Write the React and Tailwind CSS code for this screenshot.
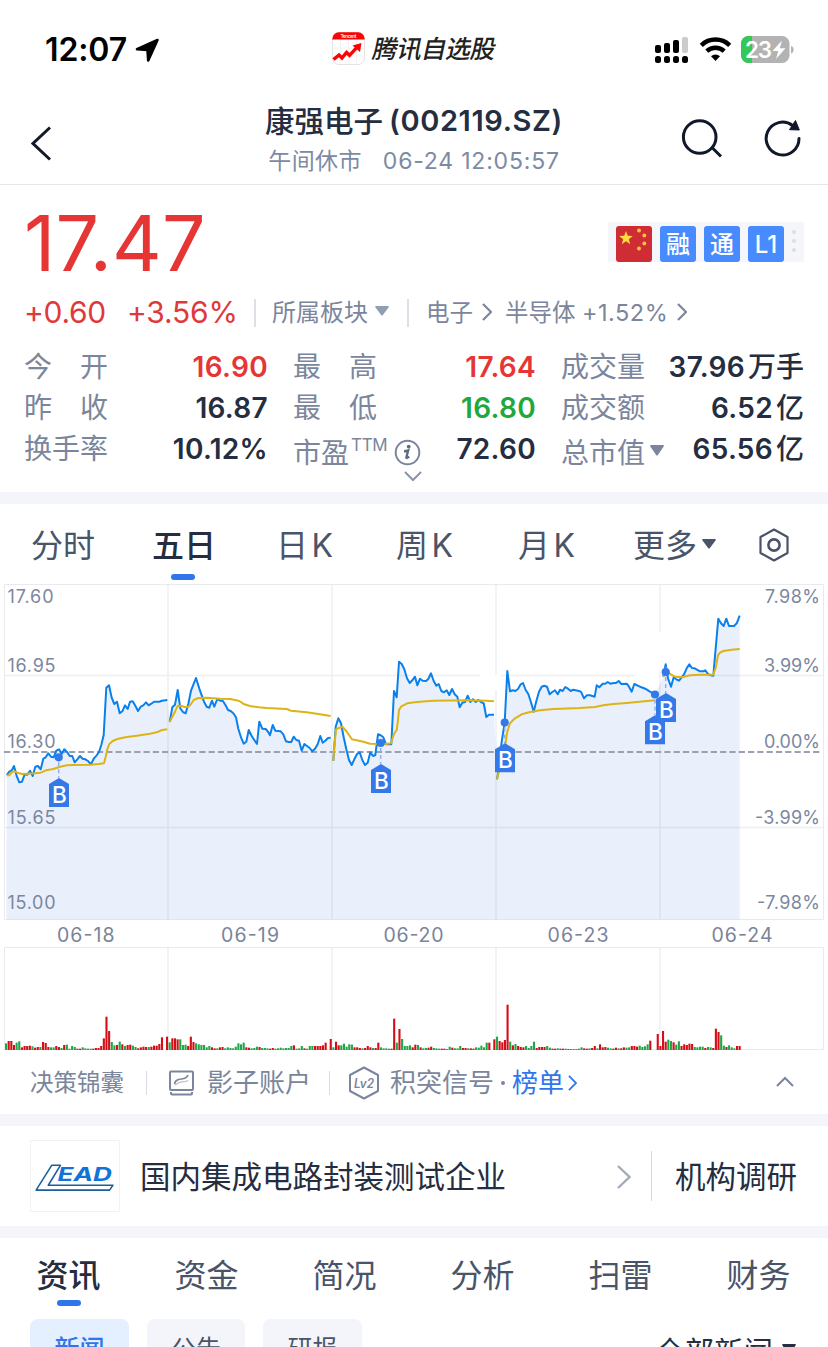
import React, { useState } from "react";

const quoteColumns = [
  [
    { label: "今　开", value: "16.90", color: "text-[#e63535]" },
    { label: "昨　收", value: "16.87", color: "text-[#252d40]" },
    { label: "换手率", value: "10.12%", color: "text-[#252d40]" },
  ],
  [
    { label: "最　高", value: "17.64", color: "text-[#e63535]" },
    { label: "最　低", value: "16.80", color: "text-[#1fa83c]" },
    { label: "市盈", value: "72.60", color: "text-[#252d40]", extra: "ttm" },
  ],
  [
    { label: "成交量", value: "37.96", unit: "万手", color: "text-[#252d40]" },
    { label: "成交额", value: "6.52", unit: "亿", color: "text-[#252d40]" },
    { label: "总市值", value: "65.56", unit: "亿", color: "text-[#252d40]", extra: "arrow" },
  ],
];

// Each session: x offset in px, then "x,y" samples in thirds of a pixel (y from 500px).
const sessions = [
  {
    x: 0,
    price:
      "20,825 28,815 36,810 42,798 50,828 58,847 66,845 74,823 82,824 90,812 98,828 106,800 114,798 122,808 130,776 137,772 145,760 153,770 161,772 169,752 177,748 185,762 193,748 201,756 209,768 217,768 224,787 232,778 240,768 248,776 256,778 264,783 273,793 281,776 290,766 297,756 304,735 311,705 319,563 327,556 335,593 343,612 351,605 359,640 367,634 375,616 383,627 390,605 398,604 406,617 414,633 422,620 430,616 438,607 446,616 454,611 462,605 478,605 486,602 502,600",
    avg: "20,826 28,826 36,816 44,814 52,818 66,822 106,820 122,818 138,811 160,807 178,801 200,796 220,795 270,794 296,792 312,790 317,770 322,748 328,732 338,723 352,717 380,711 410,707 450,701 470,697 486,690 502,688",
  },
  {
    x: 0,
    price:
      "509,666 517,622 525,614 533,570 541,625 549,636 557,640 565,612 573,572 588,534 600,572 612,605 620,620 628,623 636,602 643,620 652,597 660,602 668,602 676,614 684,630 692,633 700,640 708,652 715,686 723,712 731,731 739,725 746,690 755,708 763,720 771,732 778,665 787,686 797,687 803,694 810,706 818,675 826,692 842,694 850,703 858,724 866,726 874,726 881,710 889,720 897,722 905,752 913,732 921,738 929,744 937,754 945,746 953,733 961,708 968,728 976,722 984,714 992,713",
    avg: "509,666 517,650 525,635 533,617 545,618 556,622 565,620 573,612 581,600 595,594 620,593 660,596 690,597 706,600 718,603 733,613 750,618 776,622 800,624 860,627 872,632 920,637 950,641 992,648",
  },
  {
    x: 320,
    price:
      "40,783 47,680 55,655 63,670 71,712 79,748 87,780 95,795 103,778 111,762 119,757 127,780 135,795 143,788 151,757 159,768 166,765 174,703 182,706 190,712 198,733 214,733 222,573 230,592 237,485 245,492 253,508 261,535 269,549 277,541 285,530 292,556 300,536 308,542 318,543 325,537 333,520 341,543 349,557 356,552 364,573 372,577 380,571 388,585 396,567 404,583 412,590 419,622 427,608 435,606 443,587 451,606 459,598 467,606 475,600 483,606 491,610 499,651 507,644 522,644",
    avg: "40,783 43,740 48,688 58,683 68,681 80,695 96,718 130,725 150,731 198,732 213,730 222,702 230,690 234,660 237,630 244,619 262,610 290,606 340,602 440,601 500,602 522,604",
  },
  {
    x: 320,
    price:
      "531,838 537,800 545,725 554,667 562,513 570,574 578,571 586,573 594,567 602,553 609,549 617,570 625,582 633,607 641,635 649,604 657,575 665,560 673,557 681,560 689,583 697,576 705,571 713,583 720,569 728,573 736,561 744,566 752,573 760,569 780,574 784,577 792,595 800,586 810,586 824,590 830,556 838,562 848,551 856,551 863,546 871,551 881,549 888,549 896,543 904,552 920,551 927,560 935,575 943,552 960,560 976,566 990,575 1005,583",
    avg: "531,838 545,780 556,735 562,695 570,670 585,655 605,643 630,636 660,631 700,627 780,624 825,621 850,616 880,612 920,609 1005,601",
  },
  {
    x: 560,
    price:
      "310,530 317,493 324,535 333,560 341,532 349,538 357,542 365,532 372,523 380,505 388,493 396,504 404,505 420,514 430,514 436,511 444,522 452,526 460,527 475,356 483,370 491,378 499,356 507,378 522,378 530,370 539,347",
    avg: "310,530 318,505 330,522 345,530 365,532 390,526 420,524 460,524 468,500 474,466 480,458 490,453 515,449 539,447",
  },
];

// r = up bar, g = down bar, number = height in thirds of a pixel
const volumes = [
  {
    x: 6,
    bars: "g20 r27 r27 r15 g22 g26 r8 r12 r12 r13 g11 r7 r9 g9 r24 r21 r9 g8 g8 r12 r9 g6 r15 g16 g4 g12 g9 r4 r4 g8 g5 g4 g4 r4 r6 r6 r12 r35 r100 r57 g24 g14 r15 g25 r17 g12 r15 r16 g13 g9 r5 r8 r10 r9 g9 r10 r13 r13 r18 r38",
  },
  {
    x: 167,
    bars: "r40 g23 r35 r35 r32 g32 g15 g16 r12 r40 r24 g20 g17 g15 g15 g8 g12 r8 r5 g5 r8 r9 g5 g8 g6 g5 g10 g20 g17 g22 r8 r7 g5 g6 g10 r9 g6 g6 g5 r4 r6 g4 g5 g7 g5 g6 g6 g12 r14 g4 g5 g12 r5 g4 g12 g12 r12 r12 r12 r14 r22",
  },
  {
    x: 330.7,
    bars: "r33 g8 r25 r14 g14 g19 g10 g17 g16 r8 r8 r6 g5 r6 r12 r8 g6 r6 r22 g8 g5 g5 g4 r4 r94 g22 r63 g33 g12 g12 g14 r8 r16 g15 r8 g5 g6 r7 r10 g6 g5 g4 r4 r4 g3 g10 r7 g5 g5 g12 r6 r6 g5 r5 r4 g8 g7 g13 g8 g22 r22",
  },
  {
    x: 494.3,
    bars: "r32 g40 r27 r23 r30 r136 g25 r14 g18 r12 r9 r8 g12 g6 g12 g25 r6 r9 r9 r9 g12 g7 r4 r4 g5 r4 r4 g4 r3 g3 g3 g3 g4 g8 r5 r4 g5 r6 r12 g5 r17 r8 r9 g7 g5 r4 r7 g5 r5 r8 g7 g8 r12 r12 r10 g13 g9 g11 g17 r28",
  },
  {
    x: 657.7,
    bars: "r48 r12 r57 r25 g31 g27 r23 g16 g26 r12 r17 r15 r19 r18 g9 g8 g10 g10 r6 g9 g8 r6 r64 r54 g44 g13 r9 g14 g8 g5 r12 r12",
  },
];

const markers = [
  { x: 59, top: 778, dotX: 58.7, dotY: 757.3 },
  { x: 381, top: 764, dotX: 380.7, dotY: 743 },
  { x: 505, top: 743.3, dotX: 504.7, dotY: 722.5 },
  { x: 655, top: 715.3, dotX: 655, dotY: 694.5 },
  { x: 666, top: 693, dotX: 665.7, dotY: 672 },
];

const toPoints = (x0, raw) =>
  raw
    .split(" ")
    .map((pair) => {
      const [x, y] = pair.split(",").map(Number);
      return `${(x0 + x / 3).toFixed(1)},${(500 + y / 3).toFixed(1)}`;
    })
    .join(" ");

function Chevron({ className, d = "M1 1 9 9 1 17", box = "0 0 10 18", width = 2.2 }) {
  return (
    <svg className={className} viewBox={box} fill="none" stroke="currentColor" strokeWidth={width}>
      <path d={d} />
    </svg>
  );
}

function Triangle({ className }) {
  return (
    <svg className={className} viewBox="0 0 14 10" fill="currentColor" preserveAspectRatio="none">
      <path d="M1 0h12a.8.8 0 0 1 .7 1.3l-6 8a.9.9 0 0 1-1.4 0l-6-8A.8.8 0 0 1 1 0z" />
    </svg>
  );
}

function StatusBar() {
  return (
    <div className="flex h-[100px] items-center text-black">
      <div className="flex w-[332px] items-center pl-[45px]">
        <span className="w-[90px] text-[32px] font-semibold leading-none tracking-[-0.1px]">12:07</span>
        <svg className="h-[25px] w-[25px]" viewBox="0 0 25 25">
          <path
            d="M22.500 2 2 11.300l10.500.7.700 10.500z"
            stroke="#000"
            strokeWidth="2.600"
            strokeLinejoin="round"
          />
        </svg>
      </div>
      <div className="flex w-[323px] items-center">
        <svg className="mt-[-4px] h-[33px] w-[33px] shrink-0" viewBox="0 0 33 33">
          <rect x=".5" y=".5" width="32" height="32" rx="6.500" fill="#fff" stroke="#e3e3e3" />
          <path d="M8.500 8v24M16.500 8v24M24.500 8v24M1 16h31M1 24h31" stroke="#f1f1f1" strokeWidth=".8" />
          <path d="M.3 7.500V7A6.700 6.700 0 0 1 7 .3h19A6.700 6.700 0 0 1 32.700 7v.5z" fill="#f80505" />
          <text x="8.500" y="6" fontSize="5" fontWeight="500" fill="#fff" textLength="16">Tencent</text>
          <path d="m1.500 27.500 5.500-4.500 3 3 4.500-5.500 3 2.800 7.500-8" fill="none" stroke="#f80505" strokeWidth="3.400" />
          <path d="M20.500 13.500 29.500 11l-1.500 9z" fill="#f80505" />
        </svg>
        <span className="ml-[8px] mt-[-2px] -skew-x-12 text-[25px] font-medium leading-none tracking-[-0.5px] text-[#222]">
          腾讯自选股
        </span>
      </div>
      <svg className="h-[28px] w-[142px]" viewBox="655 36 142 28">
        {[655, 664, 673, 682].map((x) => (
          <rect key={x} x={x} y="56" width="6" height="7" rx="2.500" />
        ))}
        <rect x="655" y="45" width="6" height="8" rx="2" />
        <rect x="664" y="43" width="6" height="10" rx="2" />
        <rect x="673" y="40" width="6" height="13" rx="2" />
        <rect x="682" y="37" width="6" height="16" rx="2" fill="#ccc" />
        <g fill="none" stroke="#000" strokeWidth="4.400">
          <path d="M701.300 45.300a20.400 20.400 0 0 1 28.400 0" />
          <path d="M706.800 51.200a12.800 12.800 0 0 1 17.400 0" />
        </g>
        <path d="M711 56.300a6.600 6.600 0 0 1 9 0L715.500 61z" />
        <clipPath id="battery">
          <rect x="741" y="36" width="48.500" height="27" rx="7.500" />
        </clipPath>
        <g clipPath="url(#battery)">
          <rect x="741" y="36" width="49" height="27" fill="#b3b3b3" />
          <rect x="741" y="36" width="11" height="27" fill="#34c759" />
        </g>
        <path d="M791 46c3.500.5 3.500 7 0 7.500z" fill="#b3b3b3" />
        <text x="745" y="57.500" fontSize="22.500" fontWeight="600" fill="#fff" textLength="27">23</text>
        <path d="M782 40.500 772.500 51h5.800l-2.300 8 9.500-10.700h-5.800z" fill="#fff" />
      </svg>
    </div>
  );
}

function Header() {
  return (
    <div className="flex h-[85px] border-b border-[#e6e7ea] pt-px">
      <div className="w-[214px] pl-[31px] pt-[25px] text-[#141a2a]">
        <Chevron className="h-[35px] w-[21px]" box="31 126 21 35" d="M50 127.500 33 143.500l17 16" width={3} />
      </div>
      <div className="w-[400px] whitespace-nowrap text-center leading-none">
        <div className="flex h-10 items-center justify-center text-[29px] font-semibold text-[#252d40]">
          <span className="pt-px text-[29.500px] font-medium">康强电子</span>
          <span className="ml-[6px] mt-[-2px] tracking-[0.600px]">(002119.SZ)</span>
        </div>
        <div className="flex h-10 items-center justify-center text-[23px] text-[#7d8aa3]">
          <span className="tracking-[0.4px]">午间休市</span>
          <span className="ml-[21px] tracking-[0.800px]">06-24 12:05:57</span>
        </div>
      </div>
      <svg className="ml-[66px] mt-[16px] h-[44px] w-[124px]" viewBox="680 118 124 44" fill="none" stroke="#10182b" strokeWidth="3">
        <circle cx="699.700" cy="138" r="16.300" />
        <path d="m711.500 148 9.500 9.500" />
        <path d="M799 139.500A16.400 16.400 0 1 1 792.500 126.500" strokeLinecap="round" />
        <path d="M795.500 121.500 799.300 131l-9.800-.3z" fill="#10182b" strokeWidth="1" />
      </svg>
    </div>
  );
}

function Badges() {
  return (
    <div className="mt-[-2px] flex h-10 w-[196px] items-end bg-[#f5f6fa] pl-2 text-[24px] font-medium leading-none text-white">
      <svg className="mr-2 h-9 w-9 rounded-[3px]" viewBox="0 0 36 36">
        <rect width="36" height="36" fill="#d02c35" />
        <path d="m10 5 1.800 4.800 5 .2-4 3.200 1.400 5L10 15.300 5.800 18.200l1.400-5L3.200 10l5-.2z" fill="#fbdc3b" />
        <g fill="#f5cb35">
          <circle cx="23" cy="4.500" r="1.900" />
          <circle cx="28.300" cy="9.500" r="1.900" />
          <circle cx="28.300" cy="17.500" r="1.900" />
          <circle cx="23" cy="22.500" r="1.900" />
        </g>
      </svg>
      {["融", "通", "L1"].map((tag) => (
        <span key={tag} className="mr-2 flex h-9 w-9 items-center justify-center rounded-[3px] bg-[#478bff] pt-px">
          {tag}
        </span>
      ))}
      <div className="mb-2.5 flex flex-col gap-[5px]">
        <i className="h-1 w-1 rounded-full bg-[#dcdee2]" />
        <i className="h-1 w-1 rounded-full bg-[#dcdee2]" />
        <i className="h-1 w-1 rounded-full bg-[#dcdee2]" />
      </div>
    </div>
  );
}

function Quote() {
  return (
    <div className="h-[307px] whitespace-nowrap leading-none">
      <div className="flex h-[104px] items-center justify-between pl-6 pr-6 pt-3">
        <span className="text-[77px] tracking-[0.2px] text-[#e63535]">17.47</span>
        <Badges />
      </div>

      <div className="flex h-[47px] items-center pl-6 text-[23.500px] text-[#7b869c]">
        <span className="mt-[-1px] w-[103px] text-[30px] tracking-[-0.3px] text-[#e0393b]">+0.60</span>
        <span className="mt-[-1px] w-[127px] text-[30px] tracking-[-0.2px] text-[#e0393b]">+3.56%</span>
        <span className="h-7 w-[2px] bg-[#dde0e7]" />
        <span className="ml-4 w-[103px] text-[24px]">所属板块</span>
        <Triangle className="mt-[-3px] h-[10px] w-[14px] text-[#939db1]" />
        <span className="ml-[18px] h-7 w-[2px] bg-[#dde0e7]" />
        <span className="ml-[17px] w-[56px]">电子</span>
        <Chevron className="mt-[-1px] h-[18px] w-[10px]" />
        <span className="ml-[13px] w-[77px]">半导体</span>
        <span className="w-[95px] text-[23.500px] tracking-[0.500px]">+1.52%</span>
        <Chevron className="mt-[-1px] h-[18px] w-[10px]" />
      </div>

      <div className="mt-[10px] grid grid-cols-[243px_242px_242px] gap-x-[26px] pl-6">
        {quoteColumns.map((rows, col) => (
          <div key={col}>
            {rows.map((row) => (
              <div key={row.label} className="flex h-[41px] items-center justify-between">
                <span className={`flex items-center text-[28px] text-[#7b869c] ${row.extra ? "pt-2" : "pt-px"}`}>
                  {row.label}
                  {row.extra === "ttm" && (
                    <>
                      <span className="ml-[2px] mt-[-14px] w-[43px] text-[17px] tracking-[-0.3px]">TTM</span>
                      <svg className="h-[27px] w-[27px]" viewBox="0 0 27 27">
                        <circle cx="13.500" cy="13.500" r="11.800" fill="none" stroke="#7b869c" strokeWidth="2" />
                        <circle cx="14.700" cy="7.600" r="1.900" fill="#5f6b84" />
                        <path
                          d="M10 12.300q2.500-.2 4.200-1l-1.900 7.200q-.3 1.400 2.900-.9"
                          fill="none"
                          stroke="#5f6b84"
                          strokeWidth="2.300"
                        />
                      </svg>
                    </>
                  )}
                  {row.extra === "arrow" && <Triangle className="ml-[5px] mt-[-5px] h-[11px] w-[14px]" />}
                </span>
                <span className={`mr-[-1px] flex items-center text-[28px] font-semibold tracking-[0.3px] ${row.color}`}>
                  {row.value}
                  {row.unit && <span className="ml-[3px] pt-px font-medium tracking-normal">{row.unit}</span>}
                </span>
              </div>
            ))}
          </div>
        ))}
      </div>
      <Chevron
        className="ml-[404px] mt-[2px] h-[11px] w-[18px] text-[#8b95a9]"
        box="0 0 18 11"
        d="m1 1 8 8 8-8"
        width={2}
      />
    </div>
  );
}

function ChartTabs() {
  const [active, setActive] = useState("五日");
  const tabs = [
    { name: "分时", width: "w-[121px]" },
    { name: "五日", width: "w-[124px]" },
    { name: "日 K", width: "w-[120px]" },
    { name: "周 K", width: "w-[122px]" },
    { name: "月 K", width: "w-[115px]" },
  ];

  return (
    <div className="flex h-[80px] items-center whitespace-nowrap pl-[31px] pt-[3px] text-[32px] leading-none text-[#4a5468]">
      {tabs.map((tab) => (
        <button
          key={tab.name}
          onClick={() => setActive(tab.name)}
          className={`${tab.width} relative block h-full text-left [word-spacing:-5.500px] ${
            active === tab.name ? "font-medium text-[#252d40]" : ""
          }`}
        >
          {tab.name}
          {active === tab.name && (
            <span className="absolute bottom-1 left-[19px] h-[6px] w-6 rounded-full bg-[#2f76ea]" />
          )}
        </button>
      ))}
      <span>更多</span>
      <Triangle className="ml-[5px] mt-[-3px] h-[10px] w-[14px]" />
      <svg className="ml-[43px] mt-[-2px] h-[34px] w-[30px]" viewBox="0 0 30 34" fill="none" stroke="currentColor" strokeWidth="2.200">
        <path d="M15 1.500 28.500 9v16L15 32.500 1.500 25V9z" strokeLinejoin="round" />
        <circle cx="15" cy="17" r="5.600" strokeWidth="2.600" />
      </svg>
    </div>
  );
}

function Chart() {
  const pricePoints = sessions.map((s) => toPoints(s.x, s.price));
  const area = `6.300,919.500 ${pricePoints.join(" ")} 739.700,919.500`;

  return (
    <svg className="block h-[466px] w-[828px]" viewBox="0 584 828 466" fill="none">
      {/* grid */}
      <g stroke="#e9eaee">
        <path d="M4.500 584.500h819v335h-819zM4.500 947.500h819v102h-819z" />
        <path
          d="M5 675.500h475M501 675.500h134M660 675.500h163M5 827.500h818M168 585v334M332 585v334M496 585v90M496 690v229M660 585v47M660 672v247M168 948v101M332 948v101M496 948v101M660 948v101"
          strokeWidth="1.500"
          stroke="#eeeff2"
        />
      </g>
      <polygon points={area} fill="#2f6fe4" fillOpacity=".105" />
      <path d="M4 752H821" stroke="#9a9fb2" strokeWidth="2" strokeDasharray="6.200 3.100" />

      {/* price and average lines */}
      {sessions.map((s, i) => (
        <g key={i} strokeWidth="2" strokeLinejoin="round">
          <polyline points={pricePoints[i]} stroke="#0b80ea" />
          <polyline points={toPoints(s.x, s.avg)} stroke="#dcb416" />
        </g>
      ))}

      {/* buy markers */}
      {markers.map((m) => (
        <g key={m.x} fill="#3478ea">
          <path d={`M${m.dotX} ${m.dotY + 5}V${m.top}`} stroke="#8fb0ee" strokeWidth="1.500" strokeDasharray="4 3" />
          <circle cx={m.dotX} cy={m.dotY} r="4.100" />
          <path d={`M${m.x} ${m.top}l10 6v23h-20v-23z`} />
          <text x={m.x + 0.5} y={m.top + 25} textAnchor="middle" fontSize="22.500" fontWeight="500" fill="#fff">
            B
          </text>
        </g>
      ))}

      {/* axis labels */}
      <g fontSize="18" fill="#7b879f">
        {[
          ["17.60", 603, "7.98%", 55],
          ["16.95", 672, "3.99%", 56],
          ["16.30", 748, "0.00%", 56],
          ["15.65", 824, "-3.99%", 65],
          ["15.00", 909, "-7.98%", 63],
        ].map(([price, y, percent, width]) => (
          <g key={price}>
            <text x="7.500" y={y} textLength={price === "17.60" ? 46 : 48}>{price}</text>
            <text x={820 - width} y={y} textLength={width}>{percent}</text>
          </g>
        ))}
      </g>
      <g fontSize="19.500" fill="#7b8499">
        <text x="57" y="942" textLength="57.500">06-18</text>
        <text x="221" y="942" textLength="58">06-19</text>
        <text x="383.500" y="942" textLength="60">06-20</text>
        <text x="547.500" y="942" textLength="61">06-23</text>
        <text x="711.500" y="942" textLength="61">06-24</text>
      </g>

      {/* volume */}
      {volumes.map((v) =>
        v.bars.split(" ").map((bar, i) => {
          const h = Number(bar.slice(1)) / 3;
          return (
            <rect
              key={`${v.x}-${i}`}
              x={v.x + i * 2.643 - 1}
              y={1050 - h}
              width="2.100"
              height={h}
              fill={bar[0] === "r" ? "#d40d16" : "#1fa746"}
            />
          );
        })
      )}
    </svg>
  );
}

function Tools() {
  return (
    <div className="flex h-16 items-center whitespace-nowrap pt-px text-[26px] leading-none text-[#7b869c]">
      <span className="ml-[30px] w-[116px] text-[23.500px]">决策锦囊</span>
      <span className="h-6 w-px bg-[#d9dce3]" />
      <svg className="ml-[22px] h-[26px] w-[25px]" viewBox="0 0 25 26" fill="none" stroke="currentColor" strokeWidth="2">
        <rect x="1" y="1.500" width="23" height="18.500" rx="1" />
        <path d="M2 22v1.500q0 1 1 1h19q1 0 1-1V22" />
        <path d="M5.500 14q.5-3.500 4-4.500l4.500-.8q4-.7 5-3.700" strokeWidth="1.600" />
        <path d="M6 15q5-3.500 9-3.300 3 .3 4-1.700" strokeWidth="1.200" opacity=".5" />
      </svg>
      <span className="ml-[13px] w-[122px]">影子账户</span>
      <span className="h-6 w-px bg-[#d9dce3]" />
      <svg className="ml-[18px] h-[34px] w-[32px]" viewBox="0 0 32 34">
        <path d="M16 1.500 30 9v16l-14 7.500L2 25V9z" fill="none" stroke="currentColor" strokeWidth="2" strokeLinejoin="round" />
        <text x="6" y="21.500" fontSize="12.500" fontWeight="600" fontStyle="italic" fill="currentColor" textLength="20" lengthAdjust="spacingAndGlyphs">
          Lv2
        </text>
      </svg>
      <span className="ml-[10px] w-[111px]">积突信号</span>
      <span className="mr-[7px] h-1 w-1 rounded-full bg-[#7b869c]" />
      <span className="w-[56px] text-[#2f76ea]">榜单</span>
      <Chevron className="h-[16px] w-[9px] text-[#2f76ea]" width={2} />
      <Chevron className="ml-auto mr-[34px] mt-[-3px] h-[11px] w-[18px]" box="0 0 18 11" d="m1 10 8-8 8 8" width={2} />
    </div>
  );
}

function Company() {
  return (
    <div className="flex h-[100px] items-center whitespace-nowrap text-[30.500px] leading-none text-[#252d40]">
      <svg className="ml-[30px] h-[72px] w-[90px] border border-[#f2f2f4]" viewBox="30 1140 90 72">
        <path
          d="M51 1165 35 1190.500h75.500l3.500-5H47.500l12.500-20.500z"
          fill="#fff"
          stroke="#1b5e9e"
          strokeWidth="1.600"
          strokeLinejoin="round"
        />
        <text x="57" y="1181.500" fontSize="19.500" fontWeight="700" fontStyle="italic" fill="#1173d6" textLength="56" lengthAdjust="spacingAndGlyphs">
          EAD
        </text>
      </svg>
      <span className="ml-5 w-[477px] pt-[2px]">国内集成电路封装测试企业</span>
      <Chevron className="mt-[2px] h-[24px] w-[14px] text-[#a3abba]" box="0 0 14 24" d="m1 1 11.500 11L1 23" width={2.4} />
      <span className="ml-5 h-[50px] w-px bg-[#d5d8de]" />
      <span className="ml-[23px] pt-[2px]">机构调研</span>
    </div>
  );
}

function News() {
  const tabs = ["资讯", "资金", "简况", "分析", "扫雷", "财务"];
  return (
    <div className="whitespace-nowrap leading-none">
      <div className="flex h-[76px] pl-[36.500px] text-[32px] text-[#4a5468]">
        {tabs.map((tab, i) => (
          <div
            key={tab}
            className={`relative flex w-[138px] shrink-0 items-center ${i === 0 ? "font-medium text-[#252d40]" : ""}`}
          >
            {tab}
            {i === 0 && <span className="absolute bottom-2 left-[20.500px] h-[6px] w-6 rounded-full bg-[#2f76ea]" />}
          </div>
        ))}
      </div>
      <div className="mt-[5px] flex items-center pl-[30px] text-[25px] text-[#4a5468]">
        <span className="flex h-[60px] w-[99px] items-center justify-center rounded-[8px] bg-[#e4efff] font-medium text-[#2f76ea]">
          新闻
        </span>
        <span className="ml-[18px] flex h-[60px] w-[98px] items-center justify-center rounded-[8px] bg-[#f4f5fa]">公告</span>
        <span className="ml-[18px] flex h-[60px] w-[99px] items-center justify-center rounded-[8px] bg-[#f4f5fa]">研报</span>
        <span className="ml-auto pt-[8px] text-[29.500px] text-[#252d40]">全部新闻</span>
        <Triangle className="ml-[9px] mr-[32px] h-[10px] w-[14px] text-[#252d40]" />
      </div>
    </div>
  );
}

export default function App() {
  return (
    <div className="h-[1347px] w-[828px] overflow-hidden bg-white font-['Inter','Noto_Sans_CJK_SC',sans-serif]">
      <StatusBar />
      <Header />
      <Quote />
      <div className="h-3 bg-[#f4f5fa]" />
      <ChartTabs />
      <Chart />
      <Tools />
      <div className="h-3 bg-[#f4f5fa]" />
      <Company />
      <div className="h-3 bg-[#f4f5fa]" />
      <News />
    </div>
  );
}
